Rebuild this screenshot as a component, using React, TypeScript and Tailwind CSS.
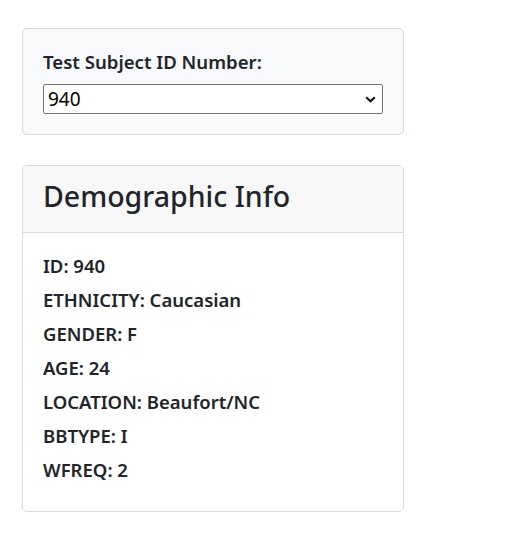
import { useState } from "react";

const ids = ["940", "941", "943", "944", "945", "946", "947", "948", "949", "950"];

const demographics: [string, string][] = [
  ["ID", "940"],
  ["ETHNICITY", "Caucasian"],
  ["GENDER", "F"],
  ["AGE", "24"],
  ["LOCATION", "Beaufort/NC"],
  ["BBTYPE", "I"],
  ["WFREQ", "2"],
];

export default function App() {
  const [subject, setSubject] = useState("940");

  return (
    <div className="min-h-screen bg-white pl-[22px] pt-[28px] font-['Noto_Sans',sans-serif] text-[#212529]">
      <div className="w-[382px] rounded-[5px] border border-[#d6d8db] bg-[#f8f9fa] p-[20px]">
        <label htmlFor="selDataset" className="mb-[10px] block text-[18.6px] font-semibold leading-[25px]">
          Test Subject ID Number:
        </label>
        <div className="relative">
          <select
            id="selDataset"
            value={subject}
            onChange={(e) => setSubject(e.target.value)}
            className="block h-[30px] w-full appearance-none rounded-[2px] border border-[#767676] bg-white pl-[4px] text-[19px] leading-[28px] text-black"
          >
            {ids.map((id) => (
              <option key={id} value={id}>
                {id}
              </option>
            ))}
          </select>
          <svg
            className="pointer-events-none absolute right-[7px] top-[12px]"
            width="11"
            height="7"
            viewBox="0 0 11 7"
            fill="none"
          >
            <path d="M1.2 1.2 5.5 5.3 9.8 1.2" stroke="#111" strokeWidth="2.2" />
          </svg>
        </div>
      </div>

      <div className="mt-[30px] w-[382px] overflow-hidden rounded-[5px] border border-[#d9d9d9] bg-white">
        <div className="border-b border-[#d9d9d9] bg-[#f7f7f7] px-[20px] pb-[19px] pt-[13px]">
          <h3 className="text-[28.5px] font-medium leading-[34px]">Demographic Info</h3>
        </div>
        <div className="flex flex-col gap-[10px] px-[20px] pb-[29px] pt-[21px]">
          {demographics.map(([key, value]) => (
            <h6 key={key} className="text-[18.5px] font-semibold leading-[24px]">
              {key}: {value}
            </h6>
          ))}
        </div>
      </div>
    </div>
  );
}
